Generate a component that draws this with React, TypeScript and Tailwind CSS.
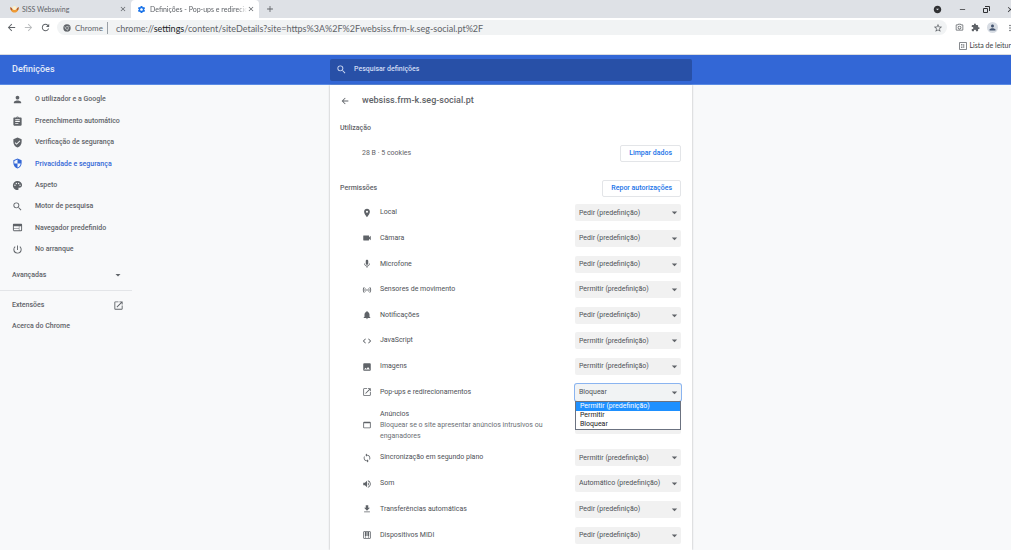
import type { ReactNode } from "react";
import type { IconType } from "react-icons";
import {
  MdAdd,
  MdArrowBack,
  MdArrowDropDown,
  MdArrowDropDownCircle,
  MdArrowForward,
  MdAssignment,
  MdClose,
  MdCode,
  MdExtension,
  MdFileDownload,
  MdImage,
  MdMic,
  MdMoreVert,
  MdNotifications,
  MdOpenInNew,
  MdOutlinePhotoCamera,
  MdOutlineStarBorder,
  MdPalette,
  MdPerson,
  MdPiano,
  MdPlace,
  MdPowerSettingsNew,
  MdRefresh,
  MdRemove,
  MdSearch,
  MdSecurity,
  MdSensors,
  MdSettings,
  MdSync,
  MdVerifiedUser,
  MdVideocam,
  MdVolumeUp,
  MdWeb,
  MdWebAsset,
} from "react-icons/md";

type Permission = {
  id: string;
  label: string;
  icon: IconType;
  value: string;
  description?: string;
  open?: boolean;
};

const ASK = "Pedir (predefinição)";
const ALLOW = "Permitir (predefinição)";
const popupOptions = [ALLOW, "Permitir", "Bloquear"];

const menuItems: { label: string; icon: IconType; active?: boolean }[] = [
  { label: "O utilizador e a Google", icon: MdPerson },
  { label: "Preenchimento automático", icon: MdAssignment },
  { label: "Verificação de segurança", icon: MdVerifiedUser },
  { label: "Privacidade e segurança", icon: MdSecurity, active: true },
  { label: "Aspeto", icon: MdPalette },
  { label: "Motor de pesquisa", icon: MdSearch },
  { label: "Navegador predefinido", icon: MdWeb },
  { label: "No arranque", icon: MdPowerSettingsNew },
];

const mainPermissions: Permission[] = [
  { id: "location", label: "Local", icon: MdPlace, value: ASK },
  { id: "camera", label: "Câmara", icon: MdVideocam, value: ASK },
  { id: "mic", label: "Microfone", icon: MdMic, value: ASK },
  { id: "sensors", label: "Sensores de movimento", icon: MdSensors, value: ALLOW },
  { id: "notifications", label: "Notificações", icon: MdNotifications, value: ASK },
  { id: "javascript", label: "JavaScript", icon: MdCode, value: ALLOW },
  { id: "images", label: "Imagens", icon: MdImage, value: ALLOW },
  { id: "popups", label: "Pop-ups e redirecionamentos", icon: MdOpenInNew, value: "Bloquear", open: true },
];

const adsPermission: Permission = {
  id: "ads",
  label: "Anúncios",
  icon: MdWebAsset,
  value: "Bloquear (predefinição)",
  description: "Bloquear se o site apresentar anúncios intrusivos ou enganadores",
};

const morePermissions: Permission[] = [
  { id: "sync", label: "Sincronização em segundo plano", icon: MdSync, value: ALLOW },
  { id: "sound", label: "Som", icon: MdVolumeUp, value: "Automático (predefinição)" },
  { id: "downloads", label: "Transferências automáticas", icon: MdFileDownload, value: ASK },
  { id: "midi", label: "Dispositivos MIDI", icon: MdPiano, value: ASK },
];

export default function App() {
  return (
    <div className="flex min-h-screen flex-col bg-white pr-0.5 font-['Roboto',sans-serif] text-[7px] text-[#5f6368]">
      <BrowserChrome />
      <header className="grid h-[30px] grid-cols-[330fr_362px_319fr] items-center border-b border-[#5b8be4] bg-[#3367d6]">
        <h1 className="pl-3 text-[9px] font-medium text-[#e4ebf9]">Definições</h1>
        <label className="flex h-[22px] items-center gap-[7px] rounded-xs bg-[#2850a7] pl-1.5 text-[#d3def5]">
          <MdSearch size={11} />
          <input
            type="search"
            aria-label="Pesquisar definições"
            placeholder="Pesquisar definições"
            className="flex-1 bg-transparent font-medium outline-none placeholder:text-[#d3def5]"
          />
        </label>
      </header>
      <div className="grid flex-1 grid-cols-[330fr_362px_319fr] bg-[#f8f9fa]">
        <Sidebar />
        <SiteDetails />
      </div>
    </div>
  );
}

function BrowserChrome() {
  return (
    <div className="overflow-hidden font-['Lato',sans-serif] text-[7px]">
      <div className="flex h-[18px] items-center bg-[#dee1e6]">
        <div className="flex w-[131px] items-center pr-1 pl-2.5">
          <SwingMark />
          <span className="ml-[3px] flex-1">SISS Webswing</span>
          <IconButton label="Fechar separador"><MdClose size={8} /></IconButton>
        </div>
        <div className="flex h-full w-[128px] items-center rounded-t-sm bg-white pr-1 pl-1.5">
          <MdSettings size={9} className="shrink-0 text-[#1a73e8]" />
          <span className="ml-1 min-w-0 flex-1 mask-r-from-90% whitespace-nowrap">Definições - Pop-ups e redirecio</span>
          <IconButton label="Fechar separador"><MdClose size={8} /></IconButton>
        </div>
        <span className="ml-1.5 flex"><IconButton label="Novo separador"><MdAdd size={10} /></IconButton></span>
        <div className="-mr-1 ml-auto flex items-center gap-4 text-[#303134]">
          <IconButton label="Pesquisar separadores"><MdArrowDropDownCircle size={9} /></IconButton>
          <IconButton label="Minimizar"><MdRemove size={9} /></IconButton>
          <IconButton label="Restaurar">
            <svg viewBox="0 0 7 7" className="size-[7px]" fill="none" stroke="currentColor">
              <path d="M.5 2.500h4v4h-4zM2 .5h4.500V5" />
            </svg>
          </IconButton>
          <IconButton label="Fechar"><MdClose size={9} /></IconButton>
        </div>
      </div>
      <div className="flex h-[19px] items-center pl-1.5">
        <div className="flex gap-1.5">
          <IconButton label="Retroceder"><MdArrowBack size={11} /></IconButton>
          <IconButton label="Avançar"><MdArrowForward size={11} className="text-[#babcbe]" /></IconButton>
          <IconButton label="Atualizar"><MdRefresh size={11} /></IconButton>
        </div>
        <div className="ml-1.5 flex h-[15px] flex-1 items-center rounded-full bg-[#f1f3f4] pr-1 pl-1.5">
          <ChromeMark />
          <span className="ml-1 border-r border-[#9aa0a6] pr-1 text-[8px]">Chrome</span>
          <div className="flex-1 pt-0.5 pl-2 text-[9px] whitespace-nowrap">
            chrome://<span className="text-[#202124]">settings</span>/content/siteDetails?site=https%3A%2F%2Fwebsiss.frm-k.seg-social.pt%2F
          </div>
          <IconButton label="Adicionar aos marcadores"><MdOutlineStarBorder size={10} /></IconButton>
        </div>
        <div className="-mr-1 ml-2 flex items-center gap-[7px]">
          <IconButton label="Captura"><MdOutlinePhotoCamera size={9} /></IconButton>
          <IconButton label="Extensões"><MdExtension size={9} /></IconButton>
          <button type="button" aria-label="Perfil" className="rounded-full bg-[#d7dce3] p-px text-[#44546f]"><MdPerson size={9} /></button>
          <IconButton label="Mais"><MdMoreVert size={10} /></IconButton>
        </div>
      </div>
      <div className="flex h-[18px] items-center justify-end border-b border-[#dadce0] text-[#3c4043]">
        <button type="button" className="flex items-center gap-[3px] whitespace-nowrap">
          <svg viewBox="0 0 16 16" className="size-2" fill="none" stroke="#5f6368" strokeWidth="1.500">
            <path d="M1 1h14v14H1zM9.500 4v8M4 5h3M4 8h3M4 11h3" />
          </svg>
          Lista de leitur
        </button>
      </div>
    </div>
  );
}

function SwingMark() {
  return (
    <svg viewBox="0 0 18 16" className="h-2 w-[9px]">
      <path d="M1 4c-1 7 3 11 8 11s9-4 8-11l-4 4-4 2-4-2z" fill="#ee9a35" />
      <path d="M1 4c-.5 3 0 5 1.500 7L5 8zM17 4c.5 3 0 5-1.500 7L13 8z" fill="#b0562c" />
      <circle cx="9" cy="6" r="4" fill="#fff0c8" />
    </svg>
  );
}

function ChromeMark() {
  return (
    <svg viewBox="0 0 24 24" className="size-2 shrink-0">
      <circle cx="12" cy="12" r="11" fill="#5f6368" />
      <circle cx="12" cy="12" r="4.5" fill="#5f6368" stroke="#f1f3f4" strokeWidth="1.500" />
      <path d="M12 7h10M7.700 14.500 2.700 6M16.300 14.500 11.300 23" stroke="#f1f3f4" />
    </svg>
  );
}

function IconButton({ label, children }: { label: string; children: ReactNode }) {
  return <button type="button" aria-label={label} className="shrink-0">{children}</button>;
}

function Sidebar() {
  return (
    <nav className="w-[132px] pt-1 font-medium">
      <ul className="grid min-h-[171px] auto-rows-fr">
        {menuItems.map(({ label, icon: Icon, active }) => (
          <li key={label} className="flex">
            <a href="#" className={active ? "flex items-center gap-3 pl-3 text-[#3367d6]" : "flex items-center gap-3 pl-3"}>
              <Icon size={11} />
              {label}
            </a>
          </li>
        ))}
      </ul>
      <button type="button" className="flex h-[30px] w-full items-center justify-between pr-2 pl-3">
        Avançadas
        <MdArrowDropDown size={12} />
      </button>
      <div className="border-t border-[#e3e5e8] pt-1">
        <a href="#" className="flex h-[21px] items-center justify-between pr-2 pl-3">
          Extensões
          <MdOpenInNew size={11} />
        </a>
        <a href="#" className="flex h-[21px] items-center pl-3">Acerca do Chrome</a>
      </div>
    </nav>
  );
}

function SiteDetails() {
  return (
    <main className="bg-white shadow-[0_0_2px_rgba(60,64,67,0.4)]">
      <div className="flex h-8 items-center gap-3 pl-2.5">
        <IconButton label="Voltar"><MdArrowBack size={10} /></IconButton>
        <h2 className="text-[9px] font-medium">websiss.frm-k.seg-social.pt</h2>
      </div>
      <h3 className="flex h-[23px] items-center pl-2.5 font-medium">Utilização</h3>
      <div className="flex h-[26px] items-center justify-between pr-[11px] pl-8">
        28 B · 5 cookies
        <OutlineButton>Limpar dados</OutlineButton>
      </div>
      <div className="mt-2.5 flex h-6 items-center justify-between pr-[11px] pl-2.5">
        <h3 className="font-medium">Permissões</h3>
        <OutlineButton>Repor autorizações</OutlineButton>
      </div>
      <ul className="grid min-h-[205px] auto-rows-fr">
        {mainPermissions.map((item) => <PermissionRow key={item.id} item={item} />)}
      </ul>
      <ul className="grid h-10">
        <PermissionRow item={adsPermission} />
      </ul>
      <ul className="grid min-h-[103px] auto-rows-fr">
        {morePermissions.map((item) => <PermissionRow key={item.id} item={item} />)}
      </ul>
    </main>
  );
}

function OutlineButton({ children }: { children: ReactNode }) {
  return (
    <button type="button" className="h-[17px] rounded-xs border border-[#e3e5e8] px-2 font-medium text-[#1a73e8]">
      {children}
    </button>
  );
}

function PermissionRow({ item }: { item: Permission }) {
  const Icon = item.icon;
  return (
    <li className="flex items-center pr-[11px] pl-8">
      <Icon size={10} className="shrink-0" />
      <label htmlFor={item.id} className="ml-2 flex-1 leading-[11px] text-[#4d5156]">
        {item.label}
        {item.description && <span className="block max-w-[170px] text-[#6b6f74]">{item.description}</span>}
      </label>
      <div className="relative w-[106px]">
        <select
          id={item.id}
          defaultValue={item.value}
          className={item.open
            ? "block h-[17px] w-full appearance-none rounded-xs bg-[#f1f3f4] pl-1 text-[#4d5156] ring-1 ring-[#8ab4f0] outline-none"
            : "block h-[17px] w-full appearance-none rounded-xs bg-[#f1f1f1] pl-1 text-[#4d5156] outline-none"}
        >
          {item.open ? popupOptions.map((option) => <option key={option}>{option}</option>) : <option>{item.value}</option>}
        </select>
        <MdArrowDropDown size={13} className="pointer-events-none absolute top-0.5 right-0" />
        {item.open && (
          <ul role="listbox" aria-label={item.label} className="absolute top-full left-0 z-10 w-full border border-[#6b7280] bg-white leading-[9px] text-[#202124]">
            {popupOptions.map((option, index) => (
              <li key={option} role="option" aria-selected={index === 0} className="pl-1 aria-selected:bg-[#1e90ff] aria-selected:text-white">
                {option}
              </li>
            ))}
          </ul>
        )}
      </div>
    </li>
  );
}
